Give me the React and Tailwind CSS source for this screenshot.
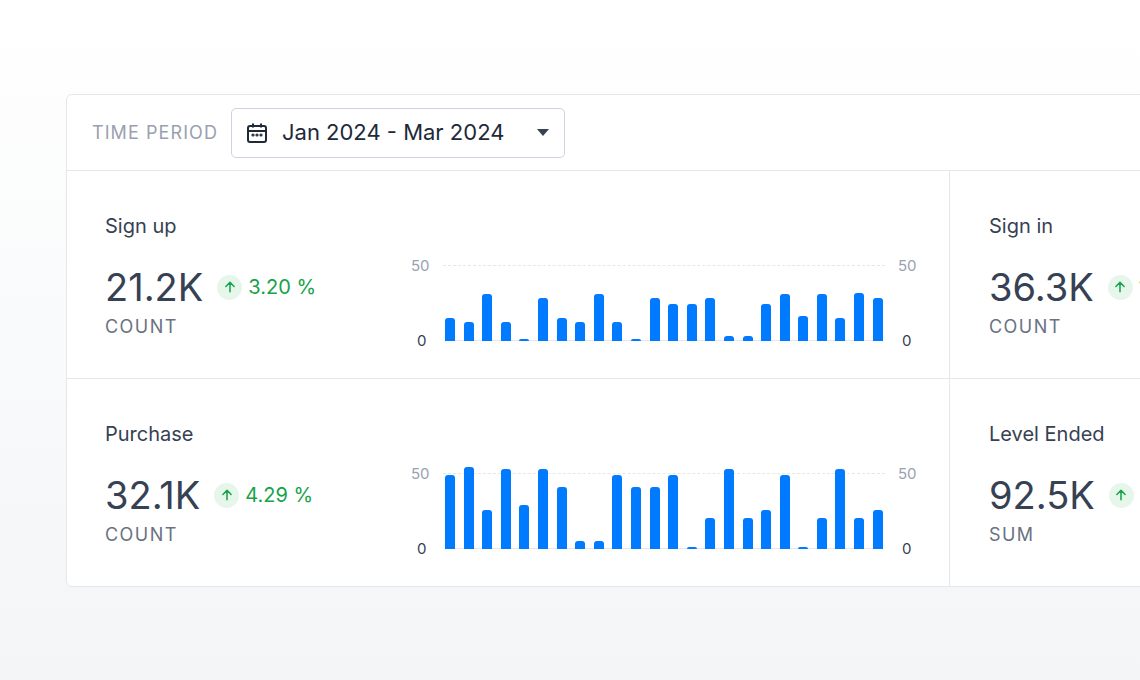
import React from "react";

const su = [23,19,47,19,2,43,23,19,47,19,2,43,37,37,43,5,5,37,47,25,47,23,48,43];
const pu = [74,82,39,80,44,80,62,8,8,74,62,62,74,2,31,80,31,39,74,2,31,80,31,39];

function Chart({ bars }) {
  return (
    <div className="relative w-[510px] h-[90px] text-[15px] text-gray-400">
      <span className="absolute left-[0px] top-[-9px]">50</span>
      <span className="absolute left-[6px] top-[66px] text-gray-700">0</span>
      <span className="absolute left-[487px] top-[-9px]">50</span>
      <span className="absolute left-[491px] top-[66px] text-gray-700">0</span>
      <div className="absolute left-[32px] w-[442px] top-[1px] border-t border-dashed border-gray-200" />
      <div className="absolute left-[34px] top-[76px] w-[438px] border-t border-gray-200" />
      <div className="absolute left-[34px] top-0 h-[77px] flex items-end gap-[8.6px]">
        {bars.map((h, i) => (
          <div key={i} className="w-[10px] bg-[#007bff] rounded-t-[3px]" style={{ height: h }} />
        ))}
      </div>
    </div>
  );
}

function Badge({ v }) {
  return (
    <span className="flex items-center gap-[6px] text-[20px] text-[#16a34a] whitespace-nowrap">
      <span className="w-[25px] h-[25px] rounded-full bg-[#e6f6ea] flex items-center justify-center shrink-0">
        <svg width="14" height="14" viewBox="0 0 24 24" fill="none" stroke="currentColor" strokeWidth="2.6" strokeLinecap="round" strokeLinejoin="round"><path d="M12 20V4M5 11l7-7 7 7"/></svg>
      </span>
      {v}
    </span>
  );
}

function Cell({ title, value, change, unit, bars, right }) {
  return (
    <div className={`flex items-start h-[207px] shrink-0 ${right ? "pl-[39px] w-[300px]" : "w-[883px] border-r border-gray-200 pl-[38px]"}`}>
      <div className="pt-[40px] w-[306px] shrink-0">
        <div className="text-[20px] text-gray-700">{title}</div>
        <div className="flex items-center gap-[14px] mt-[24px]">
          <span className="text-[38px] leading-[44px] text-gray-700">{value}</span>
          <Badge v={change} />
        </div>
        <div className="text-[18px] tracking-[0.08em] text-gray-500 mt-[4px]">{unit}</div>
      </div>
      {bars && <div className="pt-[93px]"><Chart bars={bars} /></div>}
    </div>
  );
}

export default function App() {
  return (
    <div className="w-[1140px] h-[680px] overflow-hidden bg-gradient-to-b from-white to-[#f3f5f7] pt-[94px] pl-[66px]" style={{ fontFamily: "Inter, 'Noto Sans', sans-serif" }}>
      <div className="w-[1200px] bg-white border border-gray-200 rounded-[6px]">
        <div className="h-[76px] flex items-center pl-[25px] gap-[13px] border-b border-gray-200">
          <span className="text-[18px] tracking-[0.06em] text-gray-400">TIME PERIOD</span>
          <div className="w-[334px] h-[50px] border border-[#cdd3e0] rounded-[5px] flex items-center pl-[13px] pr-[15px]">
            <svg width="24" height="24" viewBox="0 0 24 24" fill="none" stroke="#1f2937" strokeWidth="2"><rect x="3" y="5" width="18" height="16" rx="2"/><path d="M3 10h18M8 2.5v4M16 2.5v4"/><circle cx="8" cy="14" r="0.6" fill="#1f2937"/><circle cx="12" cy="14" r="0.6" fill="#1f2937"/><circle cx="16" cy="14" r="0.6" fill="#1f2937"/></svg>
            <span className="ml-[13px] text-[22px] text-gray-800 flex-1">Jan 2024 - Mar 2024</span>
            <svg width="12" height="8" viewBox="0 0 12 8"><path d="M0 0h12L6 7z" fill="#374151"/></svg>
          </div>
        </div>
        <div className="flex border-b border-gray-200">
          <Cell title="Sign up" value="21.2K" change="3.20 %" unit="COUNT" bars={su} />
          <Cell title="Sign in" value="36.3K" change="1.10 %" unit="COUNT" right />
        </div>
        <div className="flex">
          <Cell title="Purchase" value="32.1K" change="4.29 %" unit="COUNT" bars={pu} />
          <Cell title="Level Ended" value="92.5K" change="2.10 %" unit="SUM" right />
        </div>
      </div>
    </div>
  );
}
